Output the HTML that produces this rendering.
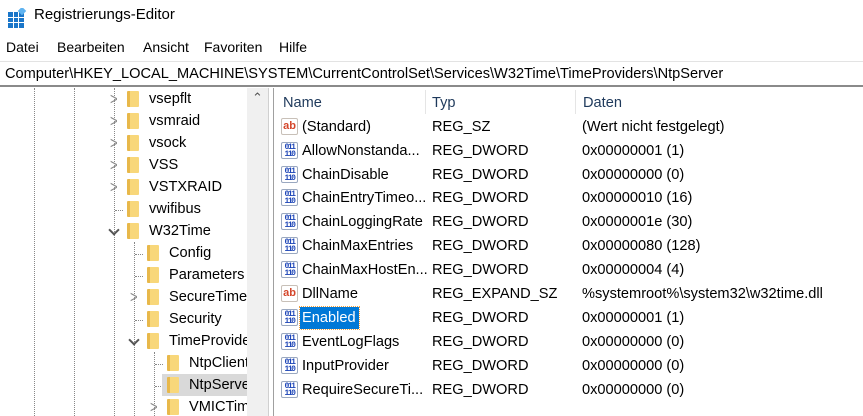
<!DOCTYPE html>
<html><head><meta charset="utf-8">
<style>
*{margin:0;padding:0;box-sizing:border-box}
body{width:863px;height:416px;overflow:hidden;background:#fff;font-family:"Liberation Sans",sans-serif;font-size:14px;color:#000;position:relative}
.a{position:absolute;white-space:nowrap}
.title{left:34px;top:6px;font-size:15px}
.menu{top:39px;font-size:14px}
.addr{left:0;top:61px;width:863px;height:26px;border-top:1px solid #e3e3e3;border-bottom:2px solid #8a8a8a;padding:4px 0 0 5px;font-size:14.6px;background:#fff}
.dv{position:absolute;border-left:1px dotted #888;width:0}
.dh{position:absolute;border-top:1px dotted #888;height:0}
.fold{position:absolute;width:12px;height:16px;background:linear-gradient(90deg,#e8b84a 0 3px,#f8d77a 3px);border-radius:1px}
.chev{position:absolute;font-size:13px;color:#888;transform:scaleY(1.3)}
.chevd{position:absolute;width:8px;height:8px;border-right:2px solid #555;border-bottom:2px solid #555;transform:rotate(45deg)}
.t{position:absolute;font-size:14.6px;white-space:nowrap;margin-top:1px}
.ico{position:absolute;width:17px;height:17px;border:1px solid #9aa8c0;border-radius:2px;background:#fff;font:bold 8px/7px "Liberation Mono",monospace;color:#1f47b8;text-align:center;padding-top:1px;letter-spacing:-1.5px;overflow:hidden}
.ab{position:absolute;width:17px;height:17px;border:1px solid #c8c0b8;border-radius:2px;background:#fff;font:bold 11px/15px "Liberation Sans",sans-serif;color:#d4462a;text-align:center}
</style></head><body>
<svg class="a" style="left:8px;top:8px" width="20" height="20" viewBox="0 0 20 20">
<rect x="0" y="4" width="16" height="16" fill="#1a76c9"/>
<g stroke="#fff" stroke-width="1"><line x1="5.5" y1="4" x2="5.5" y2="20"/><line x1="10.5" y1="4" x2="10.5" y2="20"/><line x1="0" y1="9.5" x2="16" y2="9.5"/><line x1="0" y1="14.5" x2="16" y2="14.5"/></g>
<rect x="11" y="0" width="6" height="6" fill="#5fb3f0" transform="rotate(45 14 3)"/>
</svg>
<div class="a title">Registrierungs-Editor</div>
<div class="a menu" style="left:6px">Datei</div>
<div class="a menu" style="left:57px">Bearbeiten</div>
<div class="a menu" style="left:143px">Ansicht</div>
<div class="a menu" style="left:204px">Favoriten</div>
<div class="a menu" style="left:279px">Hilfe</div>
<div class="a addr">Computer\HKEY_LOCAL_MACHINE\SYSTEM\CurrentControlSet\Services\W32Time\TimeProviders\NtpServer</div>

<div class="dv" style="left:34px;top:88px;height:328px"></div>
<div class="dv" style="left:74px;top:88px;height:328px"></div>
<div class="dv" style="left:114px;top:88px;height:328px"></div>
<div class="dv" style="left:134px;top:242px;height:174px"></div>
<div class="dv" style="left:154px;top:352px;height:64px"></div>
<div class="dh" style="left:135px;top:254px;width:8px"></div>
<div class="dh" style="left:135px;top:276px;width:8px"></div>
<div class="dh" style="left:135px;top:320px;width:8px"></div>
<div class="dh" style="left:155px;top:364px;width:8px"></div>
<div class="dh" style="left:155px;top:386px;width:8px"></div>
<div class="dh" style="left:115px;top:210px;width:8px"></div>

<div style="position:absolute;left:162px;top:374px;width:85px;height:22px;background:#d9d9d9"></div>

<span class="chev" style="left:110px;top:91px">&gt;</span><div class="fold" style="left:127px;top:91px"></div><div class="t" style="left:149px;top:90px">vsepflt</div>
<span class="chev" style="left:110px;top:113px">&gt;</span><div class="fold" style="left:127px;top:113px"></div><div class="t" style="left:149px;top:112px">vsmraid</div>
<span class="chev" style="left:110px;top:135px">&gt;</span><div class="fold" style="left:127px;top:135px"></div><div class="t" style="left:149px;top:134px">vsock</div>
<span class="chev" style="left:110px;top:157px">&gt;</span><div class="fold" style="left:127px;top:157px"></div><div class="t" style="left:149px;top:156px">VSS</div>
<span class="chev" style="left:110px;top:179px">&gt;</span><div class="fold" style="left:127px;top:179px"></div><div class="t" style="left:149px;top:178px">VSTXRAID</div>
<div class="fold" style="left:127px;top:201px"></div><div class="t" style="left:149px;top:200px">vwifibus</div>
<div class="chevd" style="left:110px;top:226px"></div><div class="fold" style="left:127px;top:223px"></div><div class="t" style="left:149px;top:222px">W32Time</div>
<div class="fold" style="left:147px;top:245px"></div><div class="t" style="left:169px;top:244px">Config</div>
<div class="fold" style="left:147px;top:267px"></div><div class="t" style="left:169px;top:266px">Parameters</div>
<span class="chev" style="left:130px;top:289px">&gt;</span><div class="fold" style="left:147px;top:289px"></div><div class="t" style="left:169px;top:288px">SecureTime</div>
<div class="fold" style="left:147px;top:311px"></div><div class="t" style="left:169px;top:310px">Security</div>
<div class="chevd" style="left:130px;top:336px"></div><div class="fold" style="left:147px;top:333px"></div><div class="t" style="left:169px;top:332px">TimeProviders</div>
<div class="fold" style="left:167px;top:355px"></div><div class="t" style="left:189px;top:354px">NtpClient</div>
<div class="fold" style="left:167px;top:377px"></div><div class="t" style="left:189px;top:376px">NtpServer</div>
<span class="chev" style="left:150px;top:399px">&gt;</span><div class="fold" style="left:167px;top:399px"></div><div class="t" style="left:189px;top:398px">VMICTimeProvider</div>

<div style="position:absolute;left:247px;top:88px;width:21px;height:328px;background:#f0f0f0"></div>
<div class="a" style="left:252px;top:90px;font-size:13px;color:#555">&#8963;</div>
<div style="position:absolute;left:268px;top:88px;width:6px;height:328px;background:#fff;border-left:1px solid #d0d0d0;border-right:1px solid #a0a0a0"></div>

<div style="position:absolute;left:274px;top:88px;width:589px;height:328px;background:#fff"></div>
<div style="position:absolute;left:425px;top:90px;width:1px;height:24px;background:#e5e5e5"></div>
<div style="position:absolute;left:575px;top:90px;width:1px;height:24px;background:#e5e5e5"></div>
<div class="t" style="left:283px;top:94px;color:#1e395b">Name</div>
<div class="t" style="left:432px;top:94px;color:#1e395b">Typ</div>
<div class="t" style="left:583px;top:94px;color:#1e395b">Daten</div>

<div class="ab" style="left:281px;top:118px">ab</div><div class="t" style="left:302px;top:118px">(Standard)</div><div class="t" style="left:432px;top:118px">REG_SZ</div><div class="t" style="left:582px;top:118px">(Wert nicht festgelegt)</div>
<div class="ico" style="left:281px;top:142px">011<br>110</div><div class="t" style="left:302px;top:142px">AllowNonstanda...</div><div class="t" style="left:432px;top:142px">REG_DWORD</div><div class="t" style="left:582px;top:142px">0x00000001 (1)</div>
<div class="ico" style="left:281px;top:166px">011<br>110</div><div class="t" style="left:302px;top:166px">ChainDisable</div><div class="t" style="left:432px;top:166px">REG_DWORD</div><div class="t" style="left:582px;top:166px">0x00000000 (0)</div>
<div class="ico" style="left:281px;top:189px">011<br>110</div><div class="t" style="left:302px;top:189px">ChainEntryTimeo...</div><div class="t" style="left:432px;top:189px">REG_DWORD</div><div class="t" style="left:582px;top:189px">0x00000010 (16)</div>
<div class="ico" style="left:281px;top:213px">011<br>110</div><div class="t" style="left:302px;top:213px">ChainLoggingRate</div><div class="t" style="left:432px;top:213px">REG_DWORD</div><div class="t" style="left:582px;top:213px">0x0000001e (30)</div>
<div class="ico" style="left:281px;top:237px">011<br>110</div><div class="t" style="left:302px;top:237px">ChainMaxEntries</div><div class="t" style="left:432px;top:237px">REG_DWORD</div><div class="t" style="left:582px;top:237px">0x00000080 (128)</div>
<div class="ico" style="left:281px;top:261px">011<br>110</div><div class="t" style="left:302px;top:261px">ChainMaxHostEn...</div><div class="t" style="left:432px;top:261px">REG_DWORD</div><div class="t" style="left:582px;top:261px">0x00000004 (4)</div>
<div class="ab" style="left:281px;top:285px">ab</div><div class="t" style="left:302px;top:285px">DllName</div><div class="t" style="left:432px;top:285px">REG_EXPAND_SZ</div><div class="t" style="left:582px;top:285px">%systemroot%\system32\w32time.dll</div>
<div class="ico" style="left:281px;top:309px">011<br>110</div><div style="position:absolute;left:300px;top:307px;width:59px;height:22px;background:#0078d7;outline:1px dotted #f0a040"></div><div class="t" style="left:302px;top:309px;color:#fff">Enabled</div><div class="t" style="left:432px;top:309px">REG_DWORD</div><div class="t" style="left:582px;top:309px">0x00000001 (1)</div>
<div class="ico" style="left:281px;top:333px">011<br>110</div><div class="t" style="left:302px;top:333px">EventLogFlags</div><div class="t" style="left:432px;top:333px">REG_DWORD</div><div class="t" style="left:582px;top:333px">0x00000000 (0)</div>
<div class="ico" style="left:281px;top:357px">011<br>110</div><div class="t" style="left:302px;top:357px">InputProvider</div><div class="t" style="left:432px;top:357px">REG_DWORD</div><div class="t" style="left:582px;top:357px">0x00000000 (0)</div>
<div class="ico" style="left:281px;top:381px">011<br>110</div><div class="t" style="left:302px;top:381px">RequireSecureTi...</div><div class="t" style="left:432px;top:381px">REG_DWORD</div><div class="t" style="left:582px;top:381px">0x00000000 (0)</div>
</body></html>
